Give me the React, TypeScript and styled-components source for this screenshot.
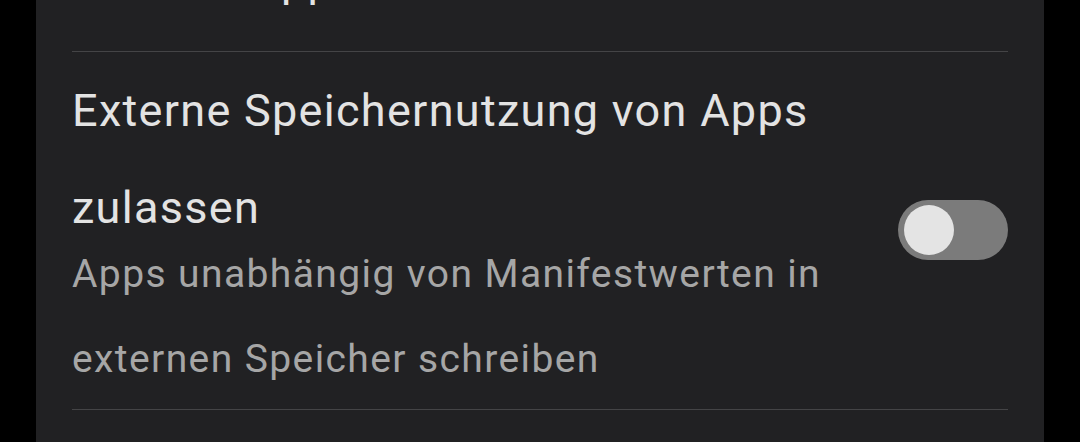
import React, { useState } from "react"
import styled, { createGlobalStyle } from "styled-components"

const GlobalStyle = createGlobalStyle`
  html, body {
    margin: 0;
    padding: 0;
    background: #000;
    overflow: hidden;
  }
  body {
    font-family: Roboto, "Noto Sans", sans-serif;
  }
`

const Screen = styled.div`
  width: 1080px;
  height: 442px;
  overflow: hidden;
  background: #000;
  display: flex;
  justify-content: center;
`

const Panel = styled.div`
  width: 1008px;
  background: #212123;
  padding: 0 36px;
  box-sizing: border-box;
  margin-top: -68px;
  display: flex;
  flex-direction: column;
`

const Item = styled.div<{ $top?: number; $bottom?: number }>`
  display: flex;
  align-items: center;
  gap: 40px;
  padding: ${(p) => p.$top ?? 10}px 0 ${(p) => p.$bottom ?? 7}px;
`

const Texts = styled.div`
  flex: 1;
  display: flex;
  flex-direction: column;
`

const Title = styled.div`
  color: #e3e3e3;
  font-size: 45px;
  line-height: 97px;
  letter-spacing: 1.3px;
`

const Summary = styled.div`
  color: #a6a6a6;
  font-size: 39px;
  line-height: 85px;
  margin-top: -24px;
  letter-spacing: 1.4px;
`

const Divider = styled.hr`
  border: none;
  height: 1px;
  background: #444446;
  margin: 0;
`

const Track = styled.button<{ $on: boolean }>`
  width: 110px;
  height: 60px;
  border-radius: 30px;
  border: none;
  padding: 5px 6px;
  margin-top: -4px;
  background: ${(p) => (p.$on ? "#5a8de0" : "#7b7b7b")};
  display: flex;
  justify-content: ${(p) => (p.$on ? "flex-end" : "flex-start")};
  align-items: center;
  cursor: pointer;
  flex-shrink: 0;
`

const Thumb = styled.span`
  width: 50px;
  height: 50px;
  border-radius: 50%;
  background: #e4e4e4;
`

const Toggle = () => {
  const [on, setOn] = useState(false)
  return (
    <Track $on={on} onClick={() => setOn(!on)} aria-pressed={on}>
      <Thumb />
    </Track>
  )
}

export default function App() {
  return (
    <Screen>
      <GlobalStyle />
      <Panel>
        <Item $top={0} $bottom={22}>
          <Texts>
            <Title>Inaktive Apps</Title>
          </Texts>
        </Item>
        <Divider />
        <Item>
          <Texts>
            <Title>
              Externe Speichernutzung von Apps
              <br />
              zulassen
            </Title>
            <Summary>
              Apps unabhängig von Manifestwerten in
              <br />
              externen Speicher schreiben
            </Summary>
          </Texts>
          <Toggle />
        </Item>
        <Divider />
      </Panel>
    </Screen>
  )
}
